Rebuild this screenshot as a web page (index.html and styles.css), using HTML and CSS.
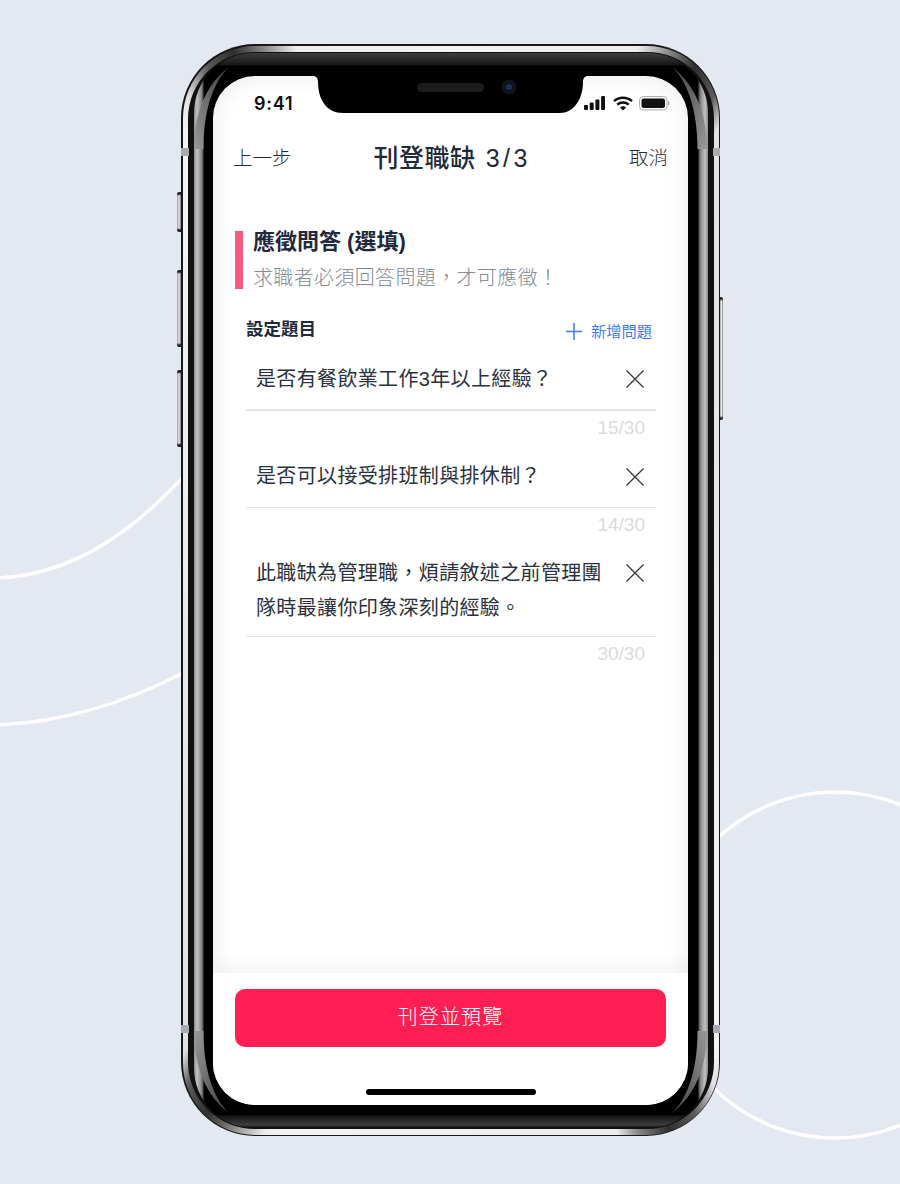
FILE: index.html
```html
<!DOCTYPE html>
<html lang="zh-Hant">
<head>
<meta charset="utf-8">
<title>刊登職缺</title>
<link rel="stylesheet" href="styles.css">
</head>
<body>
<div class="stage">
  <svg class="arcs" width="900" height="1184" viewBox="0 0 900 1184" fill="none" stroke="#fff" stroke-width="3.500">
    <path d="M-5 578C65 576 125 540 185 475"/>
    <path d="M-5 725C60 723 125 703 185 672"/>
    <circle cx="835" cy="965" r="173"/>
  </svg>
  <div class="phone">
    <span class="btn btn-mute"></span>
    <span class="btn btn-up"></span>
    <span class="btn btn-down"></span>
    <span class="btn btn-power"></span>
    <div class="steel">
      <div class="rim">
        <div class="glass">
          <div class="screen">
            <svg class="notch" width="275" height="38" viewBox="0 0 275 38">
              <path d="M0 0C3 0 5 2 5 6C5 24 14 37 30 37H247C260 37 270 24 270 6C270 2 272 0 275 0Z" fill="#000"/>
              <rect x="104" y="7" width="67" height="9" rx="4.500" fill="#1c1c1c"/>
              <circle cx="196" cy="11" r="7.500" fill="#10141c"/>
              <circle cx="196" cy="11" r="3" fill="#16305f"/>
            </svg>
            <div class="status">
              <span class="time">9:41</span>
              <div class="status-icons">
                <svg class="signal" width="21" height="14" viewBox="0 0 21 14" fill="#111"><rect x="0" y="9" width="4" height="5" rx="1"/><rect x="5.700" y="6.500" width="4" height="7.500" rx="1"/><rect x="11.400" y="3.500" width="4" height="10.500" rx="1"/><rect x="17.100" y="0" width="3.900" height="14" rx="1"/></svg>
                <svg class="wifi" width="20" height="15" viewBox="0 0 20 15" fill="none" stroke="#111" stroke-width="2.400"><path d="M1 5.200C6 .6 14 .6 19 5.200"/><path d="M4.200 8.600C7.400 5.700 12.600 5.700 15.800 8.600"/><path d="M10 14.500L6.900 11.400C8.700 9.900 11.300 9.900 13.100 11.400Z" fill="#111" stroke="none"/></svg>
                <svg width="31" height="15" viewBox="0 0 31 15" fill="none"><rect x=".6" y=".6" width="27.300" height="13.300" rx="3.500" stroke="#a9a9a9"/><rect x="2.500" y="2.500" width="23.500" height="9.500" rx="2" fill="#111"/><path d="M29 5v4.500c1-.3 1.600-1.200 1.600-2.200S30 5.300 29 5z" fill="#a9a9a9"/></svg>
              </div>
            </div>
            <header class="nav">
              <span class="nav-link">上一步</span>
              <h1 class="nav-title"><span>刊登職缺</span><span class="nav-step">3/3</span></h1>
              <span class="nav-link nav-link-end">取消</span>
            </header>
            <main class="main">
              <div class="section-head">
                <h2 class="section-title">應徵問答 (選填)</h2>
                <p class="section-sub">求職者必須回答問題，才可應徵！</p>
              </div>
              <div class="list-head">
                <span class="list-title">設定題目</span>
                <span class="add">
                  <svg width="16" height="17" viewBox="0 0 16 17" stroke="#3e7bf2" stroke-width="1.500"><path d="M8 0V17M0 8.500H16"/></svg>
                  新增問題
                </span>
              </div>
              <div class="question q-first">
                <div class="q-row">
                  <p class="q-text">是否有餐飲業工作3年以上經驗？</p>
                  <svg class="q-x" width="20" height="20" viewBox="0 0 20 20" stroke="#33383f" stroke-width="1.300"><path d="M1.500 1.500L18.500 18.500M18.500 1.500L1.500 18.500"/></svg>
                </div>
                <div class="count">15/30</div>
              </div>
              <div class="question q-second">
                <div class="q-row">
                  <p class="q-text">是否可以接受排班制與排休制？</p>
                  <svg class="q-x" width="20" height="20" viewBox="0 0 20 20" stroke="#33383f" stroke-width="1.300"><path d="M1.500 1.500L18.500 18.500M18.500 1.500L1.500 18.500"/></svg>
                </div>
                <div class="count">14/30</div>
              </div>
              <div class="question q-third">
                <div class="q-row">
                  <p class="q-text">此職缺為管理職，煩請敘述之前管理團隊時最讓你印象深刻的經驗。</p>
                  <svg class="q-x" width="20" height="20" viewBox="0 0 20 20" stroke="#33383f" stroke-width="1.300"><path d="M1.500 1.500L18.500 18.500M18.500 1.500L1.500 18.500"/></svg>
                </div>
                <div class="count">30/30</div>
              </div>
            </main>
            <footer class="footer">
              <div class="cta">刊登並預覽</div>
              <div class="home"></div>
            </footer>
          </div>
        </div>
      </div>
    </div>
    <svg class="gloss" width="539" height="1092" viewBox="0 0 539 1092">
      <defs>
        <linearGradient id="wedge" x1="0" y1="1" x2="1" y2="0">
          <stop offset="0" stop-color="#9a9a9a"/>
          <stop offset="1" stop-color="#3c3c3c"/>
        </linearGradient>
        <path id="corner" d="M13 105C13 70 25 40 48 23C33 37 22.500 65 22.500 105Z" fill="url(#wedge)"/>
      </defs>
      <use href="#corner"/>
      <use href="#corner" transform="translate(539 0) scale(-1 1)"/>
      <use href="#corner" transform="translate(0 1092) scale(1 -1)"/>
      <use href="#corner" transform="translate(539 1092) scale(-1 -1)"/>
    </svg>
    <span class="band band-tl"></span>
    <span class="band band-tr"></span>
    <span class="band band-bl"></span>
    <span class="band band-br"></span>
  </div>
</div>
</body>
</html>
```

FILE: styles.css
```css
* { box-sizing: border-box; }
html, body { margin: 0; padding: 0; }
body { font-family: "Liberation Sans", "Noto Sans CJK TC", sans-serif; }
p, h1, h2 { margin: 0; font-weight: inherit; }

.stage {
  position: relative;
  width: 900px;
  height: 1184px;
  padding: 44px 0 0 181px;
  background: #e3e8f1;
  overflow: hidden;
}
.arcs { position: absolute; left: 0; top: 0; }

/* device */
.phone {
  position: relative;
  width: 539px;
  height: 1092px;
  padding: 1.500px;
  border-radius: 74px;
  background: #17181a;
}
.steel {
  height: 100%;
  padding: 6px 5px;
  border-radius: 72px;
  background: conic-gradient(
    #f3f3f3 0deg, #ededed 19deg, #8a8a8a 22deg, #2e2e2e 25deg, #5c5c5c 28deg, #e2e2e2 30deg,
    #f3f3f3 150deg, #e2e2e2 152deg, #5c5c5c 155deg, #2e2e2e 158deg, #8a8a8a 161deg, #ededed 163deg,
    #f3f3f3 197deg, #ededed 199deg, #8a8a8a 202deg, #2e2e2e 205deg, #5c5c5c 208deg, #e2e2e2 210deg,
    #f3f3f3 330deg, #e2e2e2 332deg, #5c5c5c 335deg, #2e2e2e 338deg, #8a8a8a 341deg, #ededed 344deg, #f3f3f3 360deg
  );
}
.rim {
  height: 100%;
  padding: 1px 6px;
  border-radius: 67px;
  background: #111;
}
.glass {
  height: 100%;
  padding: 23px 19.500px;
  border-radius: 60px;
  background:
    linear-gradient(180deg, #3d3d3d 0, #161616 12px, transparent 13px, transparent calc(100% - 13px), #161616 calc(100% - 12px), #3d3d3d calc(100% - 3px), #0a0a0a 100%),
    linear-gradient(90deg, #8d8d8d 0, #c2c2c2 3px, #8f8f8f 7px, #555 9px, #000 10px, #000 calc(100% - 10px), #555 calc(100% - 9px), #8f8f8f calc(100% - 7px), #c2c2c2 calc(100% - 3px), #8d8d8d 100%);
}
.screen {
  position: relative;
  display: flex;
  flex-direction: column;
  height: 100%;
  border-radius: 42px;
  background: #fff;
  overflow: hidden;
  box-shadow: inset 0 0 22px rgba(30, 40, 60, .1);
}
.gloss { position: absolute; left: 0; top: 0; pointer-events: none; }
.btn {
  position: absolute;
  width: 4px;
  background:
    linear-gradient(180deg, #222 0, #222 2px, transparent 4px, transparent calc(100% - 4px), #222 calc(100% - 2px), #222 100%),
    linear-gradient(90deg, #9a9ca0, #e6e7ea 50%, #777a7e);
  border-radius: 2px 0 0 2px;
}
.btn-mute { left: -4px; top: 148px; height: 40px; }
.btn-up { left: -4px; top: 226px; height: 77px; }
.btn-down { left: -4px; top: 326px; height: 77px; }
.btn-power { right: -3px; top: 253px; height: 123px; width: 3px; border-radius: 0 2px 2px 0; }
.band { position: absolute; width: 7.500px; height: 8px; background: #a8abb0; }
.band-tl { left: 0; top: 104px; }
.band-tr { right: 0; top: 104px; }
.band-bl { left: 0; top: 981px; }
.band-br { right: 0; top: 981px; }

/* status */
.notch { position: absolute; left: 100px; top: 0; z-index: 1; }
.status {
  display: flex;
  flex: none;
  justify-content: space-between;
  align-items: center;
  height: 55px;
  padding: 0 18px 0 41px;
}
.time {
  padding-top: 1px;
  font: 600 18px/1 Inter, sans-serif;
  letter-spacing: .8px;
  color: #111;
}
.status-icons { display: flex; align-items: center; gap: 6px; }
.signal { margin-right: 2px; }

/* nav */
.nav {
  display: grid;
  flex: none;
  grid-template-columns: 1fr auto 1fr;
  align-items: center;
  height: 56px;
  padding: 0 20px;
}
.nav-link { font-size: 19.500px; line-height: 1; color: #1f2a3d; font-weight: 300; }
.nav-link-end { justify-self: end; }
.nav-title {
  display: flex;
  gap: 10px;
  font-size: 25px;
  line-height: 1;
  font-weight: 500;
  color: #1f2a3d;
  letter-spacing: .5px;
}
.nav-step { font-weight: 400; letter-spacing: 3.500px; margin-right: -3.500px; }

/* main */
.main { flex: 1; padding: 44px 32px 0 33px; }
.section-head {
  height: 58px;
  margin: 0 0 28px -11px;
  padding-left: 10px;
  border-left: 8px solid #f55c80;
}
.section-title {
  margin-top: 0;
  font-size: 22px;
  line-height: 22px;
  font-weight: 700;
  color: #1f2a3d;
}
.section-sub {
  margin-top: 14px;
  font-size: 20px;
  line-height: 22px;
  letter-spacing: .35px;
  font-weight: 300;
  color: #858b94;
}
.list-head {
  display: flex;
  justify-content: space-between;
  align-items: center;
  height: 26px;
  padding-right: 4px;
}
.list-title { font-size: 17.500px; font-weight: 700; color: #1f2a3d; line-height: 1; }
.add {
  display: flex;
  align-items: center;
  gap: 9px;
  padding-top: 4px;
  font-size: 15.250px;
  line-height: 1;
  color: #3e7bf2;
}
.q-first { padding-top: 19px; }
.q-second { padding-top: 21px; }
.q-third { padding-top: 21px; }
.q-row {
  display: flex;
  justify-content: space-between;
  align-items: flex-start;
  padding: 0 11px 11px 10px;
  border-bottom: 1px solid #e4e5e8;
}
.q-first .q-row { padding-bottom: 12px; border-bottom-width: 2px; }
.q-second .q-row { padding-bottom: 13px; }
.q-third .q-row { padding-bottom: 10px; }
.q-text {
  width: 350px;
  font-size: 20px;
  line-height: 35px;
  letter-spacing: .35px;
  font-weight: 400;
  color: #2a3140;
}
.q-x { flex: none; margin-top: 8px; }
.q-first .q-x, .q-third .q-x { margin-top: 7px; }
.count {
  padding: 7px 11px 0 0;
  text-align: right;
  font-size: 19px;
  line-height: 20px;
  color: #dadbde;
}

/* footer */
.footer {
  position: relative;
  flex: none;
  height: 132px;
  padding: 16px 22px 0;
  background: #fff;
  box-shadow: 0 -10px 14px rgba(60, 80, 110, .05);
}
.cta {
  height: 58px;
  border-radius: 10px;
  background: #ff1f53;
  color: #fff;
  text-align: center;
  font-size: 20px;
  font-weight: 300;
  line-height: 57px;
  letter-spacing: 1.200px;
}
.home {
  width: 170px;
  height: 6px;
  margin: 42px auto 0;
  border-radius: 3px;
  background: #000;
}
```
